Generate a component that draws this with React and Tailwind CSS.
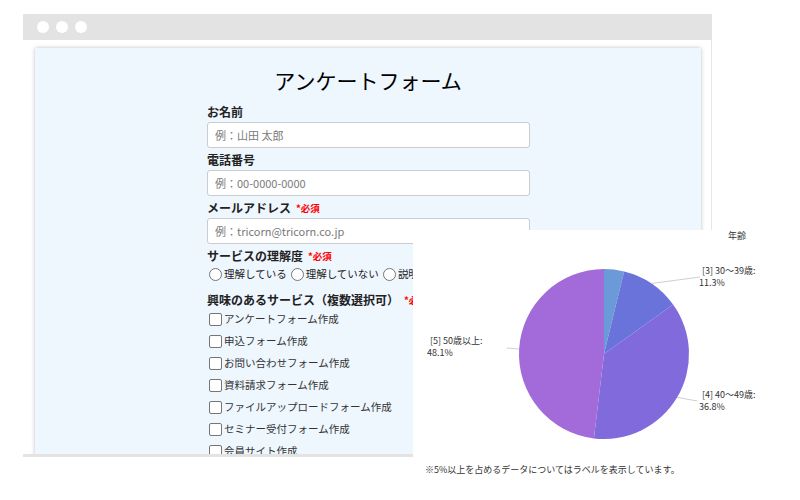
import React from 'react';

const services = [
  'アンケートフォーム作成',
  '申込フォーム作成',
  'お問い合わせフォーム作成',
  '資料請求フォーム作成',
  'ファイルアップロードフォーム作成',
  'セミナー受付フォーム作成',
  '会員サイト作成',
];

const fields = [
  { label: 'お名前', placeholder: '例：山田 太郎' },
  { label: '電話番号', placeholder: '例：00-0000-0000' },
  { label: 'メールアドレス', placeholder: '例：tricorn@tricorn.co.jp', required: true },
];

const Required = () => (
  <span className="ml-[5px] text-[9.5px] font-bold text-[#ff0000]">*必須</span>
);

const AgeChart = () => {
  const font = "'Noto Sans CJK JP', sans-serif";
  return (
    <svg width="387" height="270" viewBox="0 0 387 270">
      {/* slices, clockwise from 12 o'clock */}
      <path d="M191 124 L191 39 A85 85 0 0 1 211.1 41.4 Z" fill="#6b9ad9" />
      <path d="M191 124 L211.1 41.4 A85 85 0 0 1 260.1 74.5 Z" fill="#6a73d9" />
      <path d="M191 124 L260.1 74.5 A85 85 0 0 1 180.9 208.4 Z" fill="#816adc" />
      <path d="M191 124 L180.9 208.4 A85 85 0 0 1 191 39 Z" fill="#a36bd9" />

      {/* leader lines */}
      <line x1="238.5" y1="53.5" x2="287" y2="47" stroke="#cfcfcf" strokeWidth="1" />
      <line x1="264.2" y1="167.3" x2="284" y2="171" stroke="#cfcfcf" strokeWidth="1" />
      <line x1="106" y1="119" x2="94" y2="118" stroke="#cfcfcf" strokeWidth="1" />

      <g fontFamily={font} fontSize="9" fill="#333">
        <text x="315" y="9">年齢</text>
        <text x="289" y="44">[3] 30～39歳:</text>
        <text x="286" y="56">11.3%</text>
        <text x="289" y="168">[4] 40～49歳:</text>
        <text x="286" y="180">36.8%</text>
        <text x="17" y="114">[5] 50歳以上:</text>
        <text x="14" y="126">48.1%</text>
        <text x="12" y="243">※5%以上を占めるデータについてはラベルを表示しています。</text>
      </g>
    </svg>
  );
};

const App = () => {
  return (
    <div className="relative w-[800px] h-[500px] overflow-hidden bg-white font-['Noto_Sans_CJK_JP',sans-serif] text-[#222]">
      {/* Browser window */}
      <div className="pt-[14px] pl-[23px]">
        <div className="flex flex-col w-[689px] h-[443px]">
          <div className="flex items-center gap-[7px] h-[26px] pl-[14px] bg-[#e3e3e3]">
            <span className="w-[12px] h-[12px] rounded-full bg-white"></span>
            <span className="w-[12px] h-[12px] rounded-full bg-white"></span>
            <span className="w-[12px] h-[12px] rounded-full bg-white"></span>
          </div>

          <div className="flex-1 overflow-hidden pt-[8px] pl-[12px] border-r border-r-[#e6e6e6] border-b-[3px] border-b-[#e3e3e3]">
            {/* Form card */}
            <div className="w-[666px] h-[600px] pt-[16px] bg-[#eef6fe] shadow-[0_0_4px_rgba(0,0,0,0.25)]">
              <h1 className="h-[32px] text-center text-[21px] leading-[32px] text-black">
                アンケートフォーム
              </h1>

              <div className="mt-[6px] ml-[172px] w-[323px]">
                {fields.map((f, i) => (
                  <div key={f.label} className={i > 0 ? 'mt-[2px]' : ''}>
                    <div className="flex items-center h-[20px] text-[12px] font-bold leading-[20px]">
                      {f.label}
                      {f.required && <Required />}
                    </div>
                    <input
                      readOnly
                      placeholder={f.placeholder}
                      className="block w-full h-[26px] px-[7px] text-[11px] bg-white border border-[#cccccc] rounded-[3px] outline-none placeholder:text-[#7a7a7a]"
                    />
                  </div>
                ))}

                <div className="flex items-center mt-[2px] h-[20px] text-[12px] font-bold leading-[20px]">
                  サービスの理解度
                  <Required />
                </div>
                <div className="flex items-center h-[16px] text-[10.5px] whitespace-nowrap">
                  {['理解している', '理解していない', '説明を聞きたい'].map((t) => (
                    <span key={t} className="flex items-center mr-[2px]">
                      <span className="ml-[2px] mr-[2px] w-[13px] h-[13px] rounded-full border border-[#767676] bg-white"></span>
                      {t}
                    </span>
                  ))}
                </div>

                <div className="flex items-center mt-[10px] h-[16px] text-[12px] font-bold whitespace-nowrap">
                  興味のあるサービス（複数選択可）
                  <Required />
                </div>
                {services.map((s) => (
                  <div key={s} className="flex items-center h-[22px] text-[10.5px] text-[#333]">
                    <span className="ml-[2px] mr-[2px] w-[13px] h-[13px] rounded-[2px] border border-[#767676] bg-white"></span>
                    {s}
                  </div>
                ))}
              </div>
            </div>
          </div>
        </div>
      </div>

      {/* Chart panel laid over the window */}
      <div className="absolute left-[413px] top-[230px] w-[387px] h-[270px] bg-white">
        <AgeChart />
      </div>
    </div>
  );
};

export default App;
